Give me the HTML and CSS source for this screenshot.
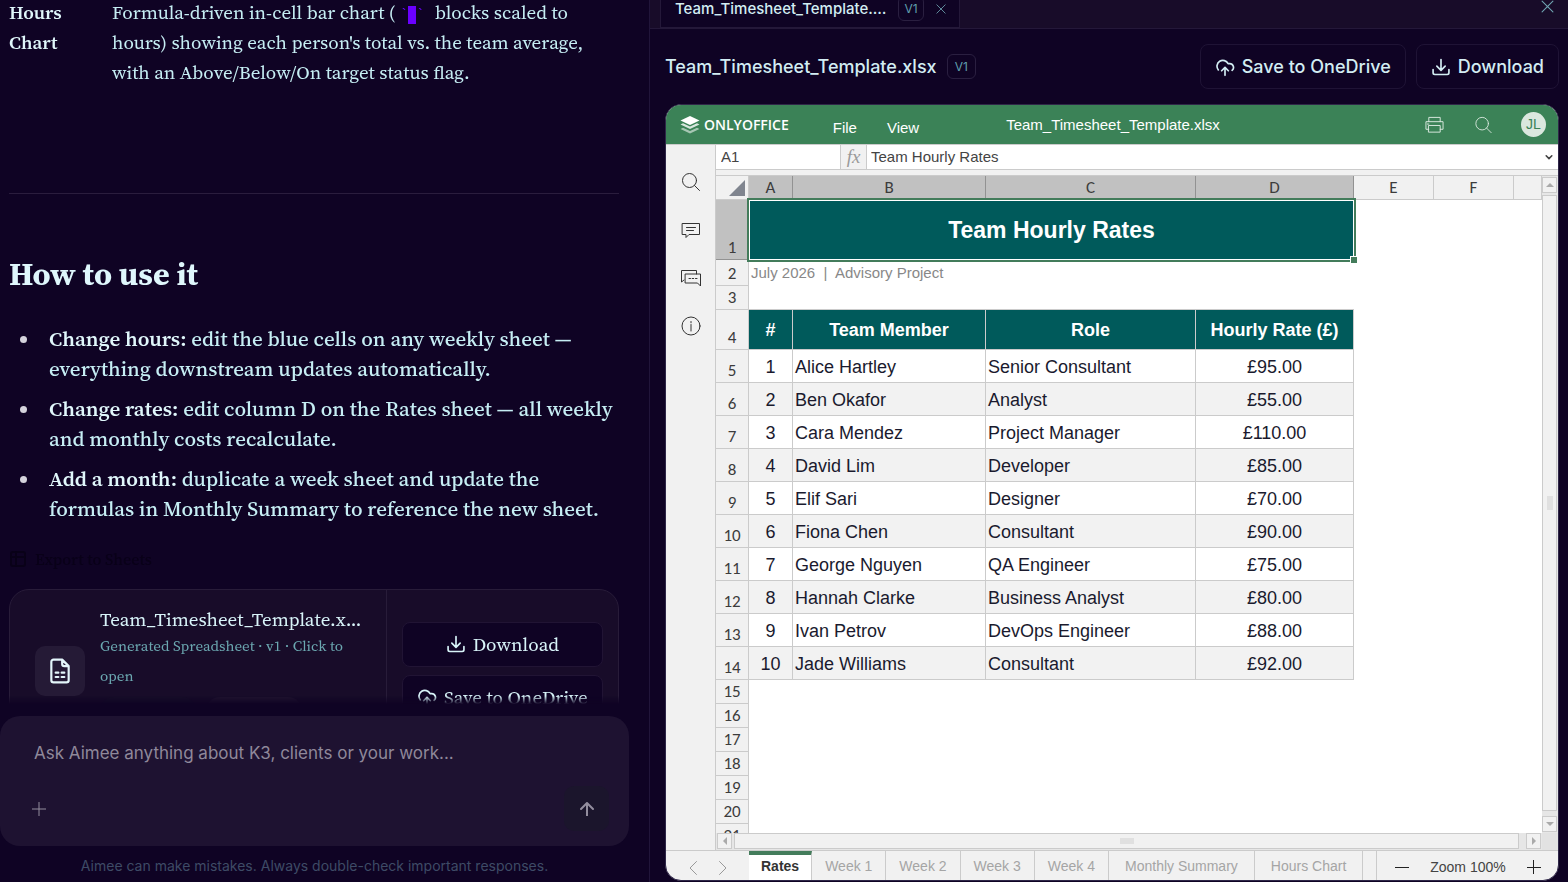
FILE: index.html
```
<!DOCTYPE html>
<html lang="en">
<head>
<meta charset="utf-8">
<title>Team_Timesheet_Template.xlsx</title>
<link rel="stylesheet" href="styles.css">
</head>
<body>
<svg width="0" height="0" class="defs" aria-hidden="true">
  <symbol id="i-download" viewBox="0 0 24 24"><path d="M12 3v13M7 11l5 5 5-5M2.500 15v4a2 2 0 0 0 2 2h15a2 2 0 0 0 2-2v-4"/></symbol>
  <symbol id="i-cloud" viewBox="0 0 24 24"><path d="M12 22v-9M8 16.500l4-4 4 4M4 15.500A7 7 0 1 1 15.700 8h1.800a4.500 4.500 0 0 1 3 8"/></symbol>
  <symbol id="i-x" viewBox="0 0 12 12"><path d="M1 1l10 10M11 1L1 11"/></symbol>
  <symbol id="i-search" viewBox="0 0 20 20"><circle cx="8.500" cy="8.500" r="7"/><path d="M13.500 13.500l5 5"/></symbol>
</svg>
<div class="app">
  <main class="chat">
    <section class="thread">
      <div class="sheet-row">
        <strong>Hours Chart</strong>
        <p>Formula-driven in-cell bar chart ( <code>`<i class="block"></i>`</code> blocks scaled to hours) showing each person's total vs. the team average, with an Above/Below/On target status flag.</p>
      </div>
      <hr>
      <h2>How to use it</h2>
      <ul>
        <li><strong>Change hours:</strong> edit the blue cells on any weekly sheet — everything downstream updates automatically.</li>
        <li><strong>Change rates:</strong> edit column D on the Rates sheet — all weekly and monthly costs recalculate.</li>
        <li><strong>Add a month:</strong> duplicate a week sheet and update the formulas in Monthly Summary to reference the new sheet.</li>
      </ul>
      <button class="export"><svg viewBox="0 0 18 18"><rect x="2" y="2" width="14" height="14" rx="2"/><path d="M2 7h14M7 2v14"/></svg>Export to Sheets</button>
      <article class="file-card">
        <div class="file-main">
          <span class="file-icon"><svg viewBox="0 0 24 24"><path d="M14 1.500H6a2 2 0 0 0-2 2v17a2 2 0 0 0 2 2h12a2 2 0 0 0 2-2V7.500zM14 1.500v4a2 2 0 0 0 2 2h4M8 13.500h2.500M13.500 13.500h2.500M8 17.500h2.500M13.500 17.500h2.500"/></svg></span>
          <div class="file-text">
            <div class="file-name">Team_Timesheet_Template.xlsx</div>
            <div class="file-meta">Generated Spreadsheet · v1 · Click to open</div>
            <div class="chips"><span class="chip green"></span><span class="chip"></span></div>
          </div>
        </div>
        <div class="file-actions">
          <button><svg><use href="#i-download"/></svg>Download</button>
          <button><svg><use href="#i-cloud"/></svg>Save to OneDrive</button>
        </div>
      </article>
    </section>
    <form class="composer">
      <input type="text" aria-label="Message" placeholder="Ask Aimee anything about K3, clients or your work...">
      <div class="composer-bar">
        <button type="button" class="plus" aria-label="Add"><svg viewBox="0 0 14 14"><path d="M7 0v14M0 7h14"/></svg></button>
        <button type="button" class="send" aria-label="Send"><svg viewBox="0 0 14 14"><path d="M7 14V1M1 7l6-6 6 6"/></svg></button>
      </div>
    </form>
    <p class="disclaimer">Aimee can make mistakes. Always double-check important responses.</p>
  </main>

  <section class="panel">
    <div class="tabbar">
      <div class="tab"><span class="tab-name">Team_Timesheet_Template.…</span><span class="version">V1</span><button aria-label="Close tab"><svg><use href="#i-x"/></svg></button></div>
      <button class="close" aria-label="Close panel"><svg><use href="#i-x"/></svg></button>
    </div>
    <div class="toolbar">
      <h1>Team_Timesheet_Template.xlsx</h1><span class="version">V1</span>
      <div class="toolbar-actions">
        <button><svg><use href="#i-cloud"/></svg>Save to OneDrive</button>
        <button><svg><use href="#i-download"/></svg>Download</button>
      </div>
    </div>

    <div class="editor">
      <header class="ed-head">
        <div class="ed-left">
          <span class="brand"><svg viewBox="0 0 20 18"><path d="M10 0l9.500 4.500L10 9 .5 4.500z"/><path opacity=".8" d="M.5 8.500l2.500-1.200 7 3.200 7-3.200 2.500 1.200L10 13z"/><path opacity=".55" d="M.5 13l2.500-1.200 7 3.200 7-3.200L19.500 13 10 17.500z"/></svg>ONLYOFFICE</span>
          <button>File</button><button>View</button>
        </div>
        <span class="ed-title">Team_Timesheet_Template.xlsx</span>
        <div class="ed-right">
          <button aria-label="Print"><svg viewBox="0 0 20 18"><path d="M4 5.500V1h12v4.500M4 13.500H1v-8h18v8h-3M4 9.500h12v7H4zM2.500 8h1.500"/></svg></button>
          <button aria-label="Search"><svg><use href="#i-search"/></svg></button>
          <span class="avatar">JL</span>
        </div>
      </header>
      <div class="ed-body">
        <nav class="rail">
          <button aria-label="Find"><svg><use href="#i-search"/></svg></button>
          <button aria-label="Comments"><svg viewBox="0 0 20 20"><path d="M1.500 3.500h17v11H8l-3 3v-3H1.500zM5.500 7.500h9M5.500 10.500h7"/></svg></button>
          <button aria-label="Chat"><svg viewBox="0 0 20 20"><path d="M15.500 6V2.500h-15v11.500l2.500-2M4.500 6h15v12l-3-3h-12zM8 10.500h1.500M11.200 10.500h1.500M14.500 10.500h1.500"/></svg></button>
          <button aria-label="About"><svg viewBox="0 0 20 20"><circle cx="10" cy="10" r="9"/><path d="M10 8.500V15M10 5.500v1.300"/></svg></button>
        </nav>
        <div class="work">
          <div class="formula">
            <input class="cell-name" aria-label="Cell name" value="A1">
            <span class="fx">fx</span>
            <input class="cell-value" aria-label="Formula" value="Team Hourly Rates">
            <button aria-label="Expand"><svg viewBox="0 0 10 10"><path d="M1.500 3.500L5 7l3.500-3.500"/></svg></button>
          </div>
          <div class="grid-area">
            <div class="cells">
              <table>
                <colgroup><col class="c-h"><col class="c-a"><col class="c-b"><col class="c-c"><col class="c-d"><col class="c-e"><col class="c-e"><col></colgroup>
                <thead><tr><th class="corner"><svg viewBox="0 0 16 16"><path d="M16 0v16H0z"/></svg></th><th class="on">A</th><th class="on">B</th><th class="on">C</th><th class="on">D</th><th>E</th><th>F</th><th></th></tr></thead>
                <tbody>
                  <tr class="r1"><th class="on">1</th><td class="title" colspan="4">Team Hourly Rates</td></tr>
                  <tr class="r2"><th>2</th><td class="note" colspan="4">July 2026&nbsp; |&nbsp; Advisory Project</td></tr>
                  <tr><th>3</th><td class="top" colspan="4"></td></tr>
                  <tr class="r4"><th>4</th><td>#</td><td>Team Member</td><td>Role</td><td>Hourly Rate (£)</td></tr>
                  <tr class="d"><th>5</th><td>1</td><td>Alice Hartley</td><td>Senior Consultant</td><td>£95.00</td></tr>
                  <tr class="d alt"><th>6</th><td>2</td><td>Ben Okafor</td><td>Analyst</td><td>£55.00</td></tr>
                  <tr class="d"><th>7</th><td>3</td><td>Cara Mendez</td><td>Project Manager</td><td>£110.00</td></tr>
                  <tr class="d alt"><th>8</th><td>4</td><td>David Lim</td><td>Developer</td><td>£85.00</td></tr>
                  <tr class="d"><th>9</th><td>5</td><td>Elif Sari</td><td>Designer</td><td>£70.00</td></tr>
                  <tr class="d alt"><th>10</th><td>6</td><td>Fiona Chen</td><td>Consultant</td><td>£90.00</td></tr>
                  <tr class="d"><th>11</th><td>7</td><td>George Nguyen</td><td>QA Engineer</td><td>£75.00</td></tr>
                  <tr class="d alt"><th>12</th><td>8</td><td>Hannah Clarke</td><td>Business Analyst</td><td>£80.00</td></tr>
                  <tr class="d"><th>13</th><td>9</td><td>Ivan Petrov</td><td>DevOps Engineer</td><td>£88.00</td></tr>
                  <tr class="d alt"><th>14</th><td>10</td><td>Jade Williams</td><td>Consultant</td><td>£92.00</td></tr>
                  <tr><th>15</th></tr><tr><th>16</th></tr><tr><th>17</th></tr><tr><th>18</th></tr><tr><th>19</th></tr><tr><th>20</th></tr><tr><th>21</th></tr>
                </tbody>
              </table>
            </div>
            <div class="scroll v"><button aria-label="Scroll up"><svg viewBox="0 0 8 8"><path d="M0 6l4-4 4 4z"/></svg></button><div class="track"><i></i></div><button aria-label="Scroll down"><svg viewBox="0 0 8 8"><path d="M0 2l4 4 4-4z"/></svg></button></div>
            <div class="scroll h"><button aria-label="Scroll left"><svg viewBox="0 0 8 8"><path d="M6 0L2 4l4 4z"/></svg></button><div class="track"><i></i></div><button aria-label="Scroll right"><svg viewBox="0 0 8 8"><path d="M2 0l4 4-4 4z"/></svg></button></div>
          </div>
        </div>
      </div>
      <footer class="ed-foot">
        <div class="arrows"><button aria-label="Previous sheet"><svg viewBox="0 0 8 14"><path d="M7.500.5L1 7l6.500 6.500"/></svg></button><button aria-label="Next sheet"><svg viewBox="0 0 8 14"><path d="M.5.5L7 7 .5 13.500"/></svg></button></div>
        <div class="sheets"><button class="current">Rates</button><button>Week 1</button><button>Week 2</button><button>Week 3</button><button>Week 4</button><button class="wide">Monthly Summary</button><button class="wide">Hours Chart</button></div>
        <div class="zoom"><button aria-label="Zoom out"><svg viewBox="0 0 14 14"><path d="M0 7.500h14"/></svg></button><span>Zoom 100%</span><button aria-label="Zoom in"><svg viewBox="0 0 14 14"><path d="M0 7.500h14M6.500 0v14"/></svg></button></div>
      </footer>
    </div>
  </section>
</div>
</body>
</html>
```
FILE: styles.css
```
* { box-sizing: border-box; }
body { margin: 0; background: #0f0324; color: #c6eef4; font-family: Inter, sans-serif; }
button, input { font: inherit; color: inherit; background: none; border: 0; padding: 0; margin: 0; }
button { display: inline-flex; align-items: center; justify-content: center; cursor: pointer; }
input { outline: 0; min-width: 0; }
h1, h2, p, ul { margin: 0; }
svg { fill: none; stroke: currentColor; stroke-linecap: round; stroke-linejoin: round; flex: none; }
.defs { position: absolute; }
.app { display: grid; grid-template-columns: 650fr 918fr; height: 100vh; overflow: hidden; }

/* Conversation */
.chat { display: flex; flex-direction: column; min-width: 0; min-height: 0; padding-right: 20px; border-right: 1px solid #21153a; }
.thread { flex: 1; min-height: 0; overflow: hidden; padding: 0 10px 0 9px; font-family: "Source Serif 4", "Liberation Serif", serif; font-size: 21px; line-height: 30px; -webkit-mask-image: linear-gradient(to top, transparent, #000 8px); mask-image: linear-gradient(to top, transparent, #000 8px); }
.thread strong { font-weight: 600; color: #e0f7fb; }
.sheet-row { display: grid; grid-template-columns: 63px 1fr; gap: 40px; margin-top: -3px; font-size: 19px; }
.sheet-row p { padding-right: 20px; }
code { font: 14px "Liberation Mono", monospace; color: #6a00ff; padding: 0 6px 0 0; }
.block { display: inline-block; width: 8px; height: 18px; background: #6a00ff; vertical-align: middle; }
hr { margin: 106px 0 0; border: 0; border-top: 1px solid #2a1d3d; }
h2 { margin-top: 60px; font-size: 32px; line-height: 40px; color: #dff7fc; }
ul { margin-top: 30px; padding-left: 32px; display: grid; gap: 10px; font-weight: 500; }
li { padding-left: 8px; }
li::marker { color: #d5d3dc; }
.export { display: flex; gap: 8px; margin-top: 20px; font-size: 16px; font-weight: 500; color: #090118; }
.export svg { width: 18px; height: 18px; stroke-width: 2; }
.file-card { display: grid; grid-template-columns: 378fr 232fr; height: 164px; margin-top: 15px; border: 1px solid #281c39; border-radius: 20px; background: #180c29; }
.file-main { display: flex; align-items: center; gap: 15px; padding: 0 20px 0 25px; min-width: 0; border-right: 1px solid #281c39; }
.file-icon { display: grid; place-items: center; flex: none; width: 50px; height: 50px; border-radius: 10px; background: #251a36; color: #e4f6fb; }
.file-icon svg { width: 26px; height: 26px; stroke-width: 2; }
.file-text { min-width: 0; align-self: flex-start; padding-top: 17px; }
.file-name { font-size: 19px; color: #d8f4f9; line-height: 24px; white-space: nowrap; overflow: hidden; text-overflow: ellipsis; }
.file-meta { padding-right: 9px; font-size: 15px; color: #6ba7b0; }
.chips { display: flex; gap: 10px; margin-top: 6px; }
.chip { width: 96px; height: 28px; border-radius: 14px; background: #20142f; }
.chip.green { background: #170f29; }
.file-actions { display: flex; flex-direction: column; justify-content: center; gap: 8px; padding: 0 15px; }
.file-actions button { height: 45px; gap: 7px; padding-bottom: 2px; border: 1px solid #211434; border-radius: 8px; background: #0f0324; font-size: 19px; color: #d8f4f9; }
.file-actions svg, .toolbar-actions svg { width: 20px; height: 20px; stroke-width: 2; }
.composer { display: flex; flex-direction: column; justify-content: space-between; height: 130px; margin-top: 12px; padding: 20px 20px 15px 34px; border-radius: 20px; background: #1e1231; }
.composer input { height: 34px; font-size: 17px; }
.composer input::placeholder { color: #8f889a; opacity: 1; }
.composer-bar { display: flex; justify-content: space-between; align-items: center; margin-left: -2px; color: #938d9e; }
.composer-bar svg { width: 14px; height: 14px; stroke-width: 1; }
.send { width: 45px; height: 45px; border-radius: 10px; background: #1b152c; }
.send svg { stroke-width: 2; }
.disclaimer { padding: 9px 0 5px; text-align: center; font-size: 14px; line-height: 22px; color: #3e4b66; }

/* File panel */
.panel { display: flex; flex-direction: column; min-width: 0; min-height: 0; }
.tabbar { display: flex; align-items: flex-end; justify-content: space-between; height: 29px; flex: none; padding: 0 14px 0 10px; overflow: hidden; background: #180c29; border-bottom: 1px solid #241839; }
.tab { display: flex; align-items: center; gap: 12px; width: 300px; height: 39px; flex: none; padding: 0 12px 0 14px; background: #0f0324; border: 1px solid #241839; }
.tab-name { font-size: 15px; font-weight: 500; white-space: nowrap; color: #d3edf3; }
.tab button, .close { color: #70a5b2; }
.tab svg { width: 10px; height: 10px; }
.tab .version { padding: 0 5px; }
.close { height: 44px; }
.close svg { width: 13px; height: 13px; }
.version { padding: 0 7px; border: 1px solid #2a1f40; border-radius: 6px; font-size: 12px; line-height: 23px; color: #5f9eac; }
.toolbar { display: flex; align-items: center; gap: 10px; height: 75px; flex: none; padding: 0 9px 0 15px; }
h1 { font-size: 18px; font-weight: 500; color: #d3edf3; white-space: nowrap; }
.toolbar-actions { display: flex; gap: 10px; margin-left: auto; }
.toolbar-actions button { height: 45px; gap: 7px; padding: 0 14px; border: 1px solid #1f1335; border-radius: 8px; font-size: 18px; font-weight: 500; color: #d3edf3; white-space: nowrap; }

/* Spreadsheet editor */
.editor { display: flex; flex-direction: column; flex: 1; min-height: 0; margin: 0 9px 1px 15px; border: 1px solid #2f2748; border-radius: 16px; overflow: hidden; background: #f1f1f1; color: #444; font-family: "Liberation Sans", sans-serif; font-size: 15px; }
.ed-head { display: grid; grid-template-columns: 1fr auto 1fr; align-items: center; height: 39px; flex: none; padding: 0 12px 0 14px; background: #3b8257; color: #fff; }
.ed-left { display: flex; align-items: center; gap: 30px; }
.ed-left button { padding-top: 5px; }
.brand { display: flex; align-items: center; gap: 4px; margin-right: 14px; font: 600 14px "Open Sans", sans-serif; }
.brand svg { width: 20px; height: 18px; fill: #fff; stroke: none; }
.ed-right { display: flex; align-items: center; justify-content: flex-end; gap: 30px; color: #dcebe1; }
.ed-right svg { width: 19px; height: 18px; stroke-width: 1; }
.avatar { width: 25px; height: 25px; margin-left: -2px; border-radius: 50%; background: #dae7de; color: #3b8257; font-size: 14px; line-height: 25px; text-align: center; }
.ed-body { display: grid; grid-template-columns: 50px 1fr; flex: 1; min-height: 0; border-top: 1px solid #cbcbcb; }
.rail { display: flex; flex-direction: column; align-items: center; gap: 28px; padding: 27px 0 0; border-right: 1px solid #cbcbcb; }
.rail svg { width: 20px; height: 20px; stroke-width: 1; stroke: #333; }
.work { display: flex; flex-direction: column; min-width: 0; min-height: 0; }
.formula { display: flex; height: 25px; flex: none; background: #fff; border-bottom: 1px solid #cbcbcb; }
.formula input { padding-bottom: 2px; }
.cell-name { width: 124px; padding-left: 5px; }
.fx { width: 27px; border: 1px solid #cbcbcb; border-width: 0 1px; background: #f1f1f1; color: #999; text-align: center; font: italic 19px/23px "Liberation Serif", serif; }
.cell-value { flex: 1; padding-left: 4px; }
.formula button { width: 18px; }
.formula svg { width: 8px; height: 8px; stroke-width: 2; }
.grid-area { display: grid; grid-template-columns: 1fr 16px; grid-template-rows: 1fr 17px; flex: 1; min-height: 0; margin-top: 5px; border-top: 1px solid #cbcbcb; background: #e2e2e2; }
.cells { overflow: hidden; background: #fff; min-height: 0; }
table { width: 100%; table-layout: fixed; border-collapse: separate; border-spacing: 0; }
.c-h { width: 33px; } .c-a { width: 44px; } .c-b { width: 193px; } .c-c { width: 210px; } .c-d { width: 158px; } .c-e { width: 80px; }
tr { height: 24px; }
th { padding: 0; height: 24px; border: solid #cbcbcb; border-width: 0 1px 1px 0; background: #f1f1f1; font: 17px/23px Carlito, Lato, sans-serif; color: #3c3c3c; vertical-align: bottom; }
th.on { background: #c1c1c1; border-color: #929292; }
.corner svg { display: block; width: 16px; height: 16px; margin: 0 3px 3px auto; fill: #80858f; stroke: none; }
td { padding: 0 2px; font-size: 18px; color: #1a1a2e; text-align: left; }
.r1 { height: 60px; } .r2 { height: 26px; } .r4 { height: 40px; } .d { height: 33px; }
.title { position: relative; background: #005a5b; color: #fff; font-size: 23px; font-weight: bold; text-align: center; border: 1px solid #fff; box-shadow: 0 0 0 2px #437c5b; }
.title::after { content: ""; position: absolute; right: -4px; bottom: -4px; width: 6px; height: 6px; background: #437c5b; border: solid #fff; border-width: 1px 0 0 1px; }
.note { padding-bottom: 2px; font-size: 15px; color: #888; }
.top { border-bottom: 1px solid #cbcbcb; }
.r4 td, .d td { padding-top: 2px; border: solid #cbcbcb; border-width: 0 1px 1px 0; }
.r4 td { background: #005a5b; color: #fff; font-weight: bold; text-align: center; }
.alt td { background: #f2f2f2; }
.d td:nth-child(2), .d td:last-child { text-align: center; }
.scroll { display: flex; align-items: stretch; gap: 2px; background: #e6e6e6; }
.scroll.v { flex-direction: column; padding: 1px 1px 1px 0; }
.scroll.h { padding: 0 1px 1px 1px; }
.scroll button { width: 15px; height: 16px; flex: none; border: 1px solid #cbcbcb; background: #f1f1f1; }
.scroll button svg { width: 8px; height: 8px; fill: #aaa; stroke: none; }
.track { display: grid; place-items: center; flex: 1; border: 1px solid #cbcbcb; background: #f1f1f1; }
.track i { background: #e0e0e0; }
.v .track { margin-bottom: 3px; } .v i { width: 6px; height: 14px; }
.h .track { margin-right: 5px; } .h i { width: 14px; height: 6px; }
.ed-foot { display: flex; height: 30px; flex: none; border-top: 1px solid #cbcbcb; font-size: 14px; }
.arrows { display: flex; align-items: center; gap: 22px; width: 83px; padding: 4px 0 0 23px; color: #999; }
.arrows svg { width: 8px; height: 14px; }
.sheets { display: flex; flex: 1; min-width: 0; color: #a5a5a5; }
.sheets button { padding: 0 13px; border-right: 1px solid #cbcbcb; white-space: nowrap; }
.sheets .wide { padding: 0 16px; }
.sheets .current { padding: 0 12px; border-top: 4px solid #437c5b; padding-bottom: 4px; background: #fff; color: #333; font-weight: bold; }
.zoom { display: flex; align-items: center; justify-content: space-between; width: 182px; padding: 3px 17px 0 18px; border-left: 1px solid #cbcbcb; }
.zoom svg { width: 14px; height: 14px; stroke-width: 1; stroke: #222; }
```
